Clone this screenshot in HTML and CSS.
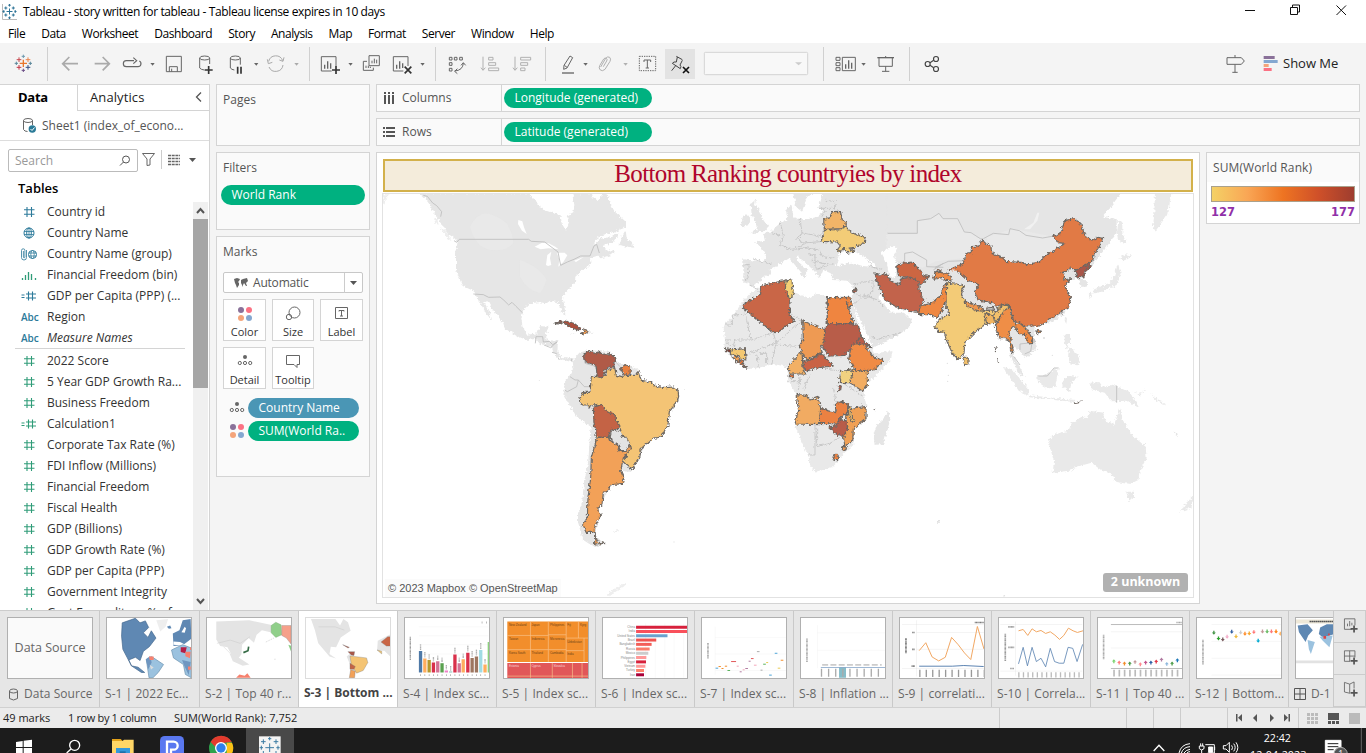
FILE: index.html
```html
<!DOCTYPE html>
<html lang="en">
<head>
<meta charset="utf-8">
<title>Tableau - story written for tableau</title>
<link rel="stylesheet" href="styles.css">
</head>
<body>
<svg class="defs" width="0" height="0">
  <symbol id="hash" viewBox="0 0 16 16"><path d="M6 3v10M10.500 3v10M3 5.800h10.500M3 10.200h10.500" fill="none" stroke="currentColor" stroke-width="1.100"/></symbol>
  <symbol id="calc" viewBox="0 0 16 16"><path d="M7.500 3.500v9M11.500 3.500v9M5 6h10M5 10h10M.5 7h3M.5 9.500h3" fill="none" stroke="currentColor" stroke-width="1.100"/></symbol>
  <symbol id="globe" viewBox="0 0 16 16"><g fill="none" stroke="currentColor"><circle cx="8" cy="8" r="5"/><ellipse cx="8" cy="8" rx="2.300" ry="5"/><path d="M3 6.500h10M3 9.500h10M8 3v10" stroke-width=".8"/></g></symbol>
  <symbol id="group" viewBox="0 0 18 16"><g fill="none" stroke="currentColor"><path d="M6.500 4v7.500a2 2 0 0 1-5 0v-7a1.700 1.700 0 0 1 3.400 0v6.500a.7.7 0 0 1-1.500 0V5" stroke-width=".8"/><circle cx="12.500" cy="8.500" r="4"/><ellipse cx="12.500" cy="8.500" rx="1.700" ry="4" stroke-width=".8"/><path d="M8.500 7h8M8.500 10h8" stroke-width=".8"/></g></symbol>
  <symbol id="bin" viewBox="0 0 16 16"><path d="M1.500 11v2M4.500 8v5M7.500 5v8M10.500 7v6M14.500 11v2" fill="none" stroke="currentColor" stroke-width="1.300"/></symbol>
  <symbol id="detail" viewBox="0 0 16 14"><circle cx="8" cy="3" r="2" fill="#666"/><g fill="none" stroke="#666"><circle cx="2.800" cy="9" r="1.600"/><circle cx="8" cy="9" r="1.600"/><circle cx="13.200" cy="9" r="1.600"/></g></symbol>
  <symbol id="dots" viewBox="0 0 16 16"><circle cx="4" cy="4" r="3" fill="#8a7199"/><circle cx="12" cy="4" r="3" fill="#fb7183"/><circle cx="4" cy="12" r="3" fill="#f4a47a"/><circle cx="12" cy="12" r="3" fill="#84a7d0"/></symbol>
  <path id="down" d="M-2-6h4v5h4l-6 7-6-7h4z"/>
  <path id="up" d="M-2 6h4V1h4l-6-7-6 7h4z"/>
  <filter id="coast" x="-5%" y="-5%" width="110%" height="110%"><feTurbulence type="fractalNoise" baseFrequency=".12" numOctaves="3" seed="4" result="n"/><feDisplacementMap in="SourceGraphic" in2="n" scale="14" xChannelSelector="R" yChannelSelector="G"/></filter>
</svg>

<header class="titlebar">
  <svg class="appicon" viewBox="0 0 16 16"><path d="M.5 0v15.500H15" stroke="#bbb" fill="none"/><path d="M7.500 4.500v6M4.500 7.500h6M3.800 2.500v3M2.300 4h3M11.300 2.500v3M9.800 4h3M3.800 9.500v3M2.300 11h3M11.300 9.500v3M9.800 11h3M7.500 0v2.500M6.200 1.200h2.600M7.500 12.500V15M6.200 13.800h2.600M1.800 6v3M13.200 6v3M.5 7.500h2M12.500 7.500h2" stroke="#2d7396" fill="none"/></svg>
  <span class="apptitle">Tableau - story written for tableau - Tableau license expires in 10 days</span>
  <svg class="wincontrols" width="126" height="24" fill="none" stroke="#111"><path d="M5 10.500h10M50.500 7.500h7v7h-7zM52.500 7v-2h7v7H58M96.500 5.500l9.500 9.500M106 5.500L96.500 15"/></svg>
</header>
<nav class="menubar"><span>File</span><span>Data</span><span>Worksheet</span><span>Dashboard</span><span>Story</span><span>Analysis</span><span>Map</span><span>Format</span><span>Server</span><span>Window</span><span>Help</span></nav>

<div class="toolbar">
  <svg class="tg" width="48" height="41" viewBox="0 129 144 123" fill="none" stroke-width="3"><path d="M70 179v22M59 190h22" stroke="#e8762c" stroke-width="4"/><path d="M57 172v14M50 179h14" stroke="#c6484f"/><path d="M84 172v14M77 179h14" stroke="#ea8550"/><path d="M57 195v14M50 202h14" stroke="#c33545"/><path d="M84 195v14M77 202h14" stroke="#344d83"/><path d="M70 164v10M65 169h10" stroke="#6e99af"/><path d="M70 206v10M65 211h10" stroke="#6a4c86"/><path d="M49 185v10M44 190h10M91 185v10M86 190h10" stroke="#5b879b"/></svg>
  <svg class="tg" width="262" height="41" viewBox="144 129 786 123" fill="none" stroke="#666" stroke-width="4">
    <g stroke="#aaa"><path d="M234 191H190M208 171l-20 20 20 20" stroke-width="5"/><path d="M284 191h44M308 171l20 20-20 20" stroke-width="5"/><path d="M806 184a22 22 0 0 1 42-2M849 195a22 22 0 0 1-42 6" stroke-width="3"/><path d="M802 178l3 13 12-4M838 180l11 4 3-12" stroke-width="3"/></g>
    <path d="M402 182h-23a9 9 0 0 0 0 18h35a9 9 0 0 0 4-17M400 173l10 9-10 9" stroke-width="3.500"/>
    <path d="M499 169h45v46h-45zM508 215v-15h24v15M515 215v-9" stroke-width="3"/>
    <ellipse cx="614" cy="174" rx="15" ry="6" stroke-width="3"/><path d="M599 174v30q4 5 14 6M629 174v18" stroke-width="3"/><path d="M626 198v24M614 210h24" stroke="#333" stroke-width="5"/>
    <ellipse cx="706" cy="174" rx="15" ry="6" stroke-width="3"/><path d="M691 174v30q4 5 12 6M721 174v20" stroke-width="3"/><path d="M713 200v21M723 200v21" stroke="#333" stroke-width="5"/>
    <path d="M451 189h13l-6 8zM762 189h13l-6 8z" fill="#666" stroke="none"/><path d="M883 189h13l-6 8z" fill="#aaa" stroke="none"/>
  </svg>
  <svg class="tg" width="126" height="41" viewBox="930 129 378 123" fill="none" stroke="#666" stroke-width="3">
    <path d="M995 213h-31v-43h44v28"/><path d="M974 206v-12M983 206v-22M992 206v-16" stroke-width="4"/><path d="M1008 198v24M996 210h24" stroke="#333" stroke-width="5"/>
    <path d="M1107 167h31v30h-31zM1116 190v-8M1123 190v-14M1130 190v-11M1101 184h-11v27h30v-8M1098 204v-7M1105 204v-7M1111 204v-4"/>
    <path d="M1210 213h-30v-43h44v28"/><path d="M1190 206v-12M1199 206v-22M1208 204v-14" stroke-width="4"/><path d="M1214 200l20 20M1234 200l-20 20" stroke="#333" stroke-width="5"/>
    <path d="M1045 189h13l-6 8zM1261 189h13l-6 8z" fill="#666" stroke="none"/>
  </svg>
  <svg class="tg" width="110" height="41" viewBox="-12 129 330 123" fill="none" stroke="#666" stroke-width="3">
    <path d="M28 172h8v8h-8zM43 172h8v8h-8zM59 172h8v8h-8zM28 188h8v8h-8zM28 205h8v8h-8zM44 213q25-2 26-24M52 206l-8 8 8 7M63 196l7-8 7 8"/>
    <g stroke="#b0b0b0"><path d="M129 170v40M123 203l6 8 7-8M146 172h13v8h-13zM146 188h21v8h-21zM146 204h30v8h-30zM225 170v40M219 203l6 8 7-8M242 172h30v8h-30zM242 188h21v8h-21zM242 204h13v8h-13z"/></g>
  </svg>
  <svg class="tg" width="278" height="41" viewBox="318 129 834 123" fill="none" stroke="#666" stroke-width="3">
    <path d="M390 168l8 5-17 31-10 4 1-12zM373 196l8 6"/><path d="M366 219h36" stroke-width="4"/>
    <path d="M482 201l15-26q6-7 12-3 5 5 1 12l-15 24q-8 7-14 2-6-6-2-13l12-20q4-5 8-2 4 3 1 8l-10 17" stroke="#b0b0b0"/>
    <path d="M430 189h13l-6 8z" fill="#666" stroke="none"/><path d="M550 189h13l-6 8z" fill="#b0b0b0" stroke="none"/>
    <path d="M598 169h49v43h-49z" stroke-dasharray="4 3"/><path d="M612 186v-6h20v6M622 180v24M617 204h10"/>
    <rect x="675" y="147" width="90" height="90" fill="#e3e3e3" stroke="none"/>
    <path d="M709 169l18 10M712 171l-3 15q-8-2-12 4l24 16q4-7-1-11l7-14M707 197l-12 15" stroke="#444"/><path d="M729 201l18 18M747 201l-18 18" stroke="#111" stroke-width="5"/>
    <rect x="793" y="157" width="310" height="67" rx="3" fill="#f8f8f8" stroke="#d4d4d4"/><path d="M1065 187h21l-10 9z" fill="#ccc" stroke="none"/>
  </svg>
  <svg class="tg" width="86" height="41" viewBox="1152 129 258 123" fill="none" stroke="#666" stroke-width="3">
    <path d="M1188 172h12v9h-12zM1188 188h12v9h-12zM1188 203h12v9h-12zM1207 172h39v40h-39z"/><path d="M1217 206v-13M1226 206v-25M1235 206v-18" stroke-width="4"/><path d="M1264 189h13l-6 8z" fill="#666" stroke="none"/>
    <path d="M1312 173h50" stroke-width="4"/><path d="M1317 173v26h40v-26M1337 168v5M1337 199v15M1326 214h22"/>
  </svg>
  <svg class="tg last" width="30" height="41" viewBox="1410 129 90 123" fill="none" stroke="#444" stroke-width="3.500"><circle cx="1463" cy="192" r="7.500"/><circle cx="1488" cy="177" r="7.500"/><circle cx="1488" cy="207" r="7.500"/><path d="M1470 188l11-7M1470 196l11 7"/></svg>
  <svg class="guide" width="56" height="41" viewBox="907 129 168 123" fill="none" stroke="#666" stroke-width="3"><path d="M919 173h43l9 10-9 10h-43zM943 165v8M943 193v24M935 217h16"/><g stroke="none"><path d="M1029 168h33v9h-33z" fill="#8a7199"/><path d="M1029 180h42v9h-42z" fill="#84a7d0"/><path d="M1029 192h15v9h-15z" fill="#f4a47a"/><path d="M1029 204h24v9h-24z" fill="#fb7183"/></g></svg>
  <span class="showme">Show Me</span>
</div>

<main class="work">
  <aside class="side">
    <div class="sidetabs"><b>Data</b><span>Analytics</span><svg width="10" height="12" fill="none" stroke="#555" stroke-width="1.300"><path d="M7 1.500L2.500 6 7 10.500"/></svg></div>
    <div class="source"><svg width="16" height="17" fill="none" stroke="#666"><ellipse cx="6" cy="3.500" rx="4.500" ry="2"/><path d="M1.500 3.500v9q1 2 4 2M10.500 3.500V8"/><circle cx="10.300" cy="12" r="3.700" fill="#2b7b98" stroke="none"/><path d="M8.500 12l1.500 1.500 2.500-3" stroke="#fff"/></svg>Sheet1 (index_of_econo...</div>
    <div class="find"><div class="search">Search<svg width="12" height="12" fill="none" stroke="#555"><circle cx="7" cy="4.500" r="3.500"/><path d="M4.500 7L1 10.500"/></svg></div>
      <svg width="60" height="22" fill="none" stroke="#666"><path d="M4.500 4.500h12L12 10v6l-3 .5V10z"/><path d="M23.500 1v19" stroke="#ccc"/><path d="M30 6.500h12M30 9.500h12M30 12.500h12M30 15.500h12" stroke-width="1.400" stroke-dasharray="3 .7"/><path d="M51 9h7l-3.500 4z" fill="#555" stroke="none"/></svg></div>
    <h2>Tables</h2>
    <div class="listwrap">
      <ul class="fields">
        <li class="d"><svg><use href="#hash"/></svg>Country id</li>
        <li class="d"><svg><use href="#globe"/></svg>Country Name</li>
        <li class="d"><svg class="w"><use href="#group"/></svg>Country Name (group)</li>
        <li><svg><use href="#bin"/></svg>Financial Freedom (bin)</li>
        <li class="d"><svg><use href="#calc"/></svg>GDP per Capita (PPP) (...</li>
        <li class="d"><i class="abc">Abc</i>Region</li>
        <li class="d"><i class="abc">Abc</i><em>Measure Names</em></li>
        <li class="rule"></li>
        <li><svg><use href="#hash"/></svg>2022 Score</li>
        <li><svg><use href="#hash"/></svg>5 Year GDP Growth Ra...</li>
        <li><svg><use href="#hash"/></svg>Business Freedom</li>
        <li><svg><use href="#calc"/></svg>Calculation1</li>
        <li><svg><use href="#hash"/></svg>Corporate Tax Rate (%)</li>
        <li><svg><use href="#hash"/></svg>FDI Inflow (Millions)</li>
        <li><svg><use href="#hash"/></svg>Financial Freedom</li>
        <li><svg><use href="#hash"/></svg>Fiscal Health</li>
        <li><svg><use href="#hash"/></svg>GDP (Billions)</li>
        <li><svg><use href="#hash"/></svg>GDP Growth Rate (%)</li>
        <li><svg><use href="#hash"/></svg>GDP per Capita (PPP)</li>
        <li><svg><use href="#hash"/></svg>Government Integrity</li>
        <li><svg><use href="#hash"/></svg>Govt Expenditure % of</li>
      </ul>
      <div class="scroll"><svg width="15" height="17" fill="none" stroke="#555" stroke-width="2"><path d="M4 11l3.500-4L11 11"/></svg><div class="thumb"></div><svg width="15" height="17" fill="none" stroke="#555" stroke-width="2"><path d="M4 6l3.500 4L11 6"/></svg></div>
    </div>
  </aside>

  <section class="cards">
    <div class="card pages">Pages</div>
    <div class="card filters">Filters<div class="pill">World Rank</div></div>
    <div class="card marks">Marks
      <div class="marktype"><svg width="14" height="10" fill="#666"><path d="M0 1l3-1 3 1-1 2-1 1 1 1 0 2-2 3-1-3-1-2zM7 2l2-1 4-1 1 3-2 2 1 3-1 0-2-3-1 2 0 2-1-2-1-2z"/></svg><span>Automatic</span><svg class="dd" width="18" height="20"><path d="M.5 0v20" stroke="#ccc"/><path d="M6 8h7l-3.500 4z" fill="#555"/></svg></div>
      <div class="btns">
        <div class="btn"><svg width="16" height="16"><use href="#dots"/></svg>Color</div>
        <div class="btn"><svg width="16" height="16" fill="none" stroke="#666"><circle cx="9.500" cy="6.500" r="5.500"/><circle cx="4" cy="11" r="2.700"/></svg>Size</div>
        <div class="btn"><svg width="16" height="16" fill="none" stroke="#666"><path d="M1.500 1.500h12v11h-12zM5 5.500v-1h5v1M7.500 4.500v5.500M6 10h3"/></svg>Label</div>
        <div class="btn"><svg width="16" height="14"><use href="#detail"/></svg>Detail</div>
        <div class="btn"><svg width="16" height="16" fill="none" stroke="#666"><path d="M1.500 1.500h13v9h-2.500v3l-3-3H1.500z"/></svg>Tooltip</div>
      </div>
      <div class="enc"><svg width="16" height="14"><use href="#detail"/></svg><div class="pill blue">Country Name</div></div>
      <div class="enc"><svg width="16" height="16"><use href="#dots"/></svg><div class="pill">SUM(World Ra..</div></div>
    </div>
  </section>

  <section class="right">
    <div class="shelf"><div><svg width="12" height="12" fill="none" stroke="#555" stroke-width="2"><path d="M2 0v2M6 0v2M10 0v2M2 3v9M6 3v9M10 3v9"/></svg>Columns</div><div class="pill">Longitude (generated)</div></div>
    <div class="shelf"><div><svg width="12" height="12" fill="none" stroke="#555" stroke-width="2"><path d="M0 2h2M0 6h2M0 10h2M3 2h9M3 6h9M3 10h9"/></svg>Rows</div><div class="pill">Latitude (generated)</div></div>
    <div class="vizrow">
      <div class="viz">
        <h1>Bottom Ranking countryies by index</h1>
        <div class="map">
          <svg width="810" height="403" viewBox="383 194 810 403">
            <!-- Americas -->
            <g transform="translate(380 150) scale(.33333)">
              <g fill="#e6e6e6" filter="url(#coast)">
                <path d="M118 130L135 145 150 165 163 190 172 200 180 220 196 235 202 250 225 266 232 278 228 310 228 360 240 390 248 408 280 422 292 445 306 468 318 490 336 512 328 485 312 455 322 450 335 475 355 500 370 520 374 535 410 558 440 570 468 567 480 582 515 590 520 607 540 628 560 632 577 637 580 626 560 622 545 622 532 605 534 572 500 571 498 550 506 530 480 528 472 550 442 554 428 530 424 505 430 480 450 460 475 457 500 460 510 452 534 457 543 475 546 487 556 496 553 465 546 440 565 420 585 400 586 380 610 358 632 345 630 325 650 318 665 325 692 316 705 305 695 300 680 306 670 285 700 275 716 250 690 262 660 266 640 286 648 268 665 256 702 246 738 232 738 216 715 194 703 183 690 160 684 135 665 130 664 142 650 150 638 140 636 130 577 130 583 165 580 187 560 197 567 220 558 242 545 220 542 196 510 186 485 178 470 155 452 141 447 130Z"/>
                <path d="M716 285L722 265 737 240 740 265 755 275 760 293 743 290Z"/><path d="M8 133l20 0-10 10-4 20-6 2zM162 205l10 3 4 16-10-3zM180 230l20 16 15 25-16-10z" fill="#eee"/>
                <path d="M578 632L598 608 625 600 690 606 716 640 755 650 772 658 782 690 830 710 865 712 893 735 895 752 865 790 862 835 795 885 765 950 752 966 722 962 720 985 690 1005 670 1050 655 1080 650 1130 645 1160 680 1183 642 1191 610 1170 594 1120 594 1090 606 1060 612 1000 625 930 632 830 588 798 550 730 556 690 575 670 580 652Z" />
                <path d="M618 541l24 6-15 4zM572 549l12 1-8 6z M700 1142l22-2-10 6-12 0z M680 1335l20-17 30-15 12 0-35 22-18 14z" fill="#eee"/>
                <circle cx="475" cy="694" r="2"/><circle cx="913" cy="718" r="2"/><circle cx="882" cy="1176" r="2"/>
              </g>
              <g fill="#ebebeb"><path d="M270 230q20-40 50-40 40 10 60 30 20 30 20 60-20 20-40 20-70 10-90-70zM420 330q60 20 80 60-10 30-20 40-40-10-60-50z" opacity=".5"/></g>
              <g fill="#fff"><path d="M415 210l12 4 5 18 8 20-14-10-12-20zM464 290l22-12 20 2 20 10 10 8-30-3-24 3zM498 345l4-30 12-10-4 20 4 20-10 3zM530 308l24 0 8 8-12 20-15 14 3-22zM582 332l30-12-24 16z"/></g>
              <g fill="none" stroke="#bdbdbd" stroke-width="2.500"><path d="M222 272l8 5 8-9H446l8 6 40 2 40 30 8 40 20-10 20-8 20-10h28l12-30 8-5 8 26M130 136l12 3 16 20 12 8 15 18-3 15"/><path d="M280 432l30 2 16 8 34-1 12 10 14 14 10-8 12 12 20 20M466 580l2-20 20 0 2 16 18-2 10 10 14-8M492 585l20 8 18-17M516 607l14 4M534 622l4 8M576 625l-2 8M610 610l5 30 35 10 0 30M570 680l15 10 10 0 18 20 20 0M595 690l-5 20-28 15-8-5M702 630l18 20"/></g>
              <g stroke="#6d6762" stroke-width="3.500" stroke-linejoin="round" filter="url(#coast)">
                <path fill="#ab4f3c" d="M524 523l14-10 20 0 26 8 18 14-4 6-26-7-12-12-20-5-10 6z"/><path fill="#ee9a52" d="M602 550l8-4 2-8 8 2 1 12z"/><path fill="#b05a47" d="M611 616l14-14 18 8 12-4 14 7 22-2 17 16-6 12 0 10-26 8-6 28-18-4-4-36-24-6-12-10z"/>
                <path fill="#e8803f" d="M722 657l12-12 18 3-2 24-17 4z"/>
                <path fill="#f4c474" d="M634 678l18 2 14 4 12-10 2-12 24-9 5 23 14 4 16-4 30 0 5-15 10 30 30 6 12 12 30 4 24-2 14 10 2 18-4 16-24 30-4 38-20 38-24 4-14 10-22 20-5 28-24 36-28-26 12-16 8-24-12-10-5-24-14-14 0-24-18-14-10-16-24-12-10-9-12-9-16 10-2-6-16 0-10-16 12-22 20 0z"/>
                <path fill="#c46344" d="M640 772l26-9 10 18 30 15 0 12 14 20-6 12-20-2-10 24-36 0 0-18-6-24z"/>
                <path fill="#e3e3e3" d="M690 860l4-16 20-6 9 4 2 16 14 4 10 20-8 22-24 0 3-14-25-16z"/>
                <path fill="#f2a158" d="M652 862l36 0 4 10 25 16-3 14 24 0 14-16 2 10-24 28-8 38 10 24-4 14-38 5-3 18-17 4-4 38-12 6 0 14 10 8-18 32-4 22-24 0-10-22 14-22 2-60 8-60 2-60 14-50zM644 1150l8 26 24 4-32 2z"/>
              </g>
            </g>
            <!-- Asia and Oceania base -->
            <g transform="translate(900 190) scale(.33333)">
              <g fill="#e5e5e5" filter="url(#coast)">
                <path d="M-60 0H670L610 80 650 90 650 130 590 210 575 225 545 265 562 275 560 290 540 290 538 262 510 270 490 290 508 330 495 370 450 400 410 405 400 440 412 475 375 505 358 480 340 470 342 500 375 560 360 555 330 495 325 450 300 450 285 400 250 405 195 460 192 490 175 508 140 450 130 405 108 375 60 370 10 360 -60 250Z"/>
                <path d="M765 0h50l-10 70-40 55-6-15 4-40zM655 90l12 10 0 30 12 30-24-8-4-20zM655 205l22-12 20 4-26 18zM654 220l8 30-14 40-20 4-16 10-30 6-4-10 48-20 16-20zM566 308l12 2-6 18zM495 380l6 4-2 18-5-10zM494 432l16 0 0 26-10 20-6-20zM508 470l32 30-6 26-24-6-6-20zM308 530l30 10 50 60-6 14-26-12zM386 616l140 14-4 6-134-14zM412 562l64-28-10 56-24 6-28-20zM486 570l20-12 28 2-18 14-8 32-20-14zM568 578l30-2 10 14 30-6 50 22 30 44-40-18-44 2-20-26-40-10zM700 605l20 6 18-14-18 20zM752 612l50 36-30-16z" fill="#e9e9e9"/>
                <path d="M444 750L465 732 505 722 515 700 545 680 560 685 570 662 612 668 610 688 642 704 660 655 668 690 682 712 690 730 737 770 740 805 720 840 715 870 690 882 650 876 630 850 605 842 575 818 525 832 510 842 458 848 462 815ZM678 905h24l0 18-14 10zM840 965l22-30 22-20-10 38z" fill="#e9e9e9"/>
                <path d="M820 724l18 14-8-2zM111 990h8v8h-8zM310 1222l8-5v6z" fill="#e0e0e0"/>
              </g>
              <path fill="#f1f1f1" d="M372 118l28-20 12-30 6 0-6 24-22 26z"/><path fill="#e9e9e9" d="M-50 130h102l0-38 40-6 25-16 12 16 44 0 20 40 20 2 34 22-50 54-90 10-40 20-55-20-64 0zM260 140l80-24 120 24 30 40-110 46-60-10-50-30z"/>
              <g fill="none" stroke="#bdbdbd" stroke-width="2.500"><path d="M-50 130h102l0-38 40-6 25-16 12 16 44 0 20 40 20 2 34 22M250 146l30-16 46 4 4-18 28 6 20 14 50 8 34-6M14 225v-35l24-4 42 24 0 20 50 2M105 232l40-18 50-2M100 240l30-20M412 558l30 0 20-24 14 0M650 588v50M342 500l18 25M360 480l0-18 36-4-4 26-18 8"/></g>
            </g>
            <!-- Europe, Africa, Middle East -->
            <g transform="translate(700 190) scale(.33333)">
              <g fill="#e5e5e5" filter="url(#coast)">
                <path d="M165 157L195 152 188 128 212 128 228 110 245 95 262 92 258 60 275 45 280 82 300 88 330 86 352 80 372 62 355 55 370 0 560 0 560 260 640 365 620 360 588 345 545 310 535 320 558 350 575 368 612 368 638 395 620 420 520 473 462 350 455 322 458 285 445 272 400 270 392 250 370 240 360 265 340 240 290 195 295 215 322 240 312 268 302 245 268 205 230 228 208 240 216 248 190 262 175 278 156 287 130 275 130 208 190 215 198 195 182 170Z"/>
                <path fill="#e9e9e9" d="M180 290L255 270 278 270 282 295 278 305 330 325 352 310 385 322 450 322 460 345 480 430 515 475 522 490 578 483 572 510 505 580 490 602 500 650 500 690 460 722 460 765 432 790 400 830 345 846 330 825 325 798 300 745 283 702 298 650 288 610 265 575 262 535 250 528 220 522 170 535 140 537 110 515 72 480 75 450 70 405 100 375 128 335 150 310Z"/>
                <path d="M524 765L520 735 530 705 552 685 565 662 572 685 550 762Z"/>
                <path d="M148 132L170 118 168 100 155 75 152 42 168 28 165 45 175 55 190 90 204 110 196 122ZM122 112l6-30 14-10 8 12-6 22zM278 0l10 50 18 15 14-40 28-25z"/>
              </g>
              <g fill="#fff" filter="url(#coast)"><path d="M408 228l10-38 20-8 10 14 20-12 30 20 24 16 6 12-40-4-34-10zM545 190l30-22 20 4-14 24 10 24-4 44-20-6-6-38z"/></g>
              <g fill="none" stroke="#c2c2c2" stroke-width="2.500" filter="url(#coast)"><path d="M240 96l10 44-12 26 22 6M215 128l30 10M300 86l6 45-16 15 20 12-6 12-20 0M306 128l56 12M362 155l-52 4M310 172l48 8 10 20 35 5M325 190l20 8 0 30 16 10M130 225l18-2 -4 40 -8 10M160 208l55 14M246 166l24 12 50-4M290 150l16-20M335 210l30 10 36 2M345 240l40-15M355 55l48 0 4-20-30-4M376 60l-10 20M372 118l-12 20M460 285l60-15-2 30-16 25-30-10M460 345l30-30 40 14 20 20M515 440l18 8 70-20M500 210l30 30M505 228l40 10"/><path d="M150 282l34 28M72 405h25v-30l34-2M130 350l24 100-50 0-4 24-24-20M154 450l75-25M280 390l-60 35 8 34-80 30M228 460l80-70M215 525l12-60 80 5M200 520v-30l-22 0M178 530l-8-36M270 312l2 60 34 20M380 405v-80M310 602l20-50M300 560l-5 40M430 580l60 40M350 710v60l40-10 50-30M325 795l20 0 0-90M356 620l-2 20M408 660l60-4M400 500l-20 0 10 40 28 2M480 640l14 10M265 575l30 0M400 590l10 60M76 450l20 0"/></g>
              <g stroke="#6d6762" stroke-width="3.500" stroke-linejoin="round" filter="url(#coast)">
                <path fill="#f2b468" d="M371 88l17-5 9-18 24-1 6 26 12 10-10 16-56 2z"/>
                <path fill="#f3cc77" d="M374 118l42 2 22-10 14 16 43 16-2 16-26 14-20 2 16 8-20 8-6-14-12 0-4 12-10-8 10-12-10-12-48-2z"/>
                <path fill="#c96646" d="M182 288l72-17 8 30 8 16-2 60 16 12-50 38-14 0-90-73 0-10 52-32z"/>
                <path fill="#f3cf74" d="M258 272l18-2 4 40-10 18-14-30z"/>
                <path fill="#ef8540" d="M382 323l68-1 6 22-6 8-10-15 22 64H382z"/>
                <path fill="#b85d49" d="M382 402h92l8 32-12 28-2 24-20-6-16 16-44 2-18-24-8-20 12-20 2-24z"/>
                <path fill="#b85d49" d="M482 434l14 22 20 18-26-10-20-4z"/>
                <path fill="#ee9a52" d="M308 392l66 27-2 35-10 14 4 20-44 22-12-12-12-30 12-20z"/>
                <path fill="#c96244" d="M308 516l30-8 26-20 18 24 18 16-50 6-34 10z"/>
                <path fill="#f2b065" d="M262 534l38-48 6 0 4 56 8 10-46 0z"/>
                <path fill="#f08b45" d="M456 462l36 0 30 40 30 8-30 30-52 4-24-36z"/>
                <path fill="#f2ad62" d="M454 538l20 6 28-4 0 44-14 20-38-26z"/>
                <path fill="#f1d180" d="M422 544l34-4 2 14-10 24-30 0z"/>
                <path fill="#f1ab62" d="M288 614l34 2 8 14 24-8 8 34 14 4-14 20 2 24-80-2 12-40z"/>
                <path fill="#eb8142" d="M362 656l46 12-2-26 20-8 18 8-2 28-22 14-12 18-50-2z"/>
                <path fill="#f0a055" d="M444 670l12-16 42-4 0 36-38 30-2 38-24 14-4-30 14-28-6-28z"/>
                <path fill="#f3bd66" d="M446 642l8 16 0 20 10 14-6 6-12-22z"/>
                <path fill="#b85b48" d="M386 710l20-2 14-20 22 6 0 24-10 22-24-8z"/>
                <circle cx="407" cy="801" r="8" fill="#e8803f"/><circle cx="433" cy="775" r="6" fill="#ee9a52"/>
                <path fill="#f3c872" d="M90 480l46-4 2 34-12-2-10-12-10 0-14-2z"/><path fill="#f0a055" d="M100 504l10-8 10 12-12 8z"/><path fill="#e8763c" d="M112 516l12-6 16 26z"/><path fill="#7c4038" d="M73 476l18 2 0 8-10 0z"/>
                <path fill="#e8763c" d="M268 555h12v8h-12z"/><path fill="#b85d49" d="M458 305l8-12 2 8-6 8zM414 592l10-4-2 12-6 2zM518 656l6 4z"/>
                <path fill="#cc6642" d="M590 228l16-8 30-4 26 26 8 14 18 4-26 24-30-22-36-2z"/>
                <path fill="#c2644b" d="M525 248l12 8 20-6 20 28 22 6 6-18 24-4 28 10 0 26 14 30-6 22 8 18-46-4-8-6-28-6-36-22-16-36-10-26z"/>
              </g>
            </g>
            <!-- Asia marks -->
            <g transform="translate(900 190) scale(.33333)">
              <g stroke="#6d6762" stroke-width="3.500" stroke-linejoin="round" filter="url(#coast)">
                <path fill="#e17a45" d="M146 240l44-20 8-30 16-2 0-18 20-2 14-20 10 14 14 4 4 24 30 12 12 12 52 4 12 6 34-8 18-18 50-30 10-8-20-2-16-20 24-8 12-38 28-6 20 14 14 40 22 10 16-8 14 2-12 34-12 10-6 24-40 24-14 4-14-6-10 10-14 4 8 10-4 12 24-4-20 22 8 10 10 28-6 24-28 20-24 14-36 24-44 0-20-12-14-2-4-30-12-16-24 4-24-14-42-8-8-26 10-20-30-12-34-30-10z"/>
                <path fill="#a95748" d="M526 242l20-12 26-12-4 16-16 14 0 12-20 4-4-12z"/>
                <path fill="#ef8843" d="M60 348l34-8 28-24 12-32 14-6 8 40-24 24-10 30-16 10-12-8-38 0z"/><path fill="#ee8a45" d="M102 268l2-20 18 0 24 2 10 20-20 2-8-10z"/><path fill="#e8803f" d="M110 244l6-8 8 4z"/>
                <path fill="#f3cb77" d="M140 278l20 4 10 0 22 6-8 26 14 20 50 24 40 8 10-20 24-4-2 14-14 14-12 22-40 12-24 18-36 36-2 32-16 18-18-16-20-44-4-20-20-4-10-16 18-22 26-14-10-24z"/>
                <path fill="#f0954c" d="M196 334l50 18 10 12-24-2-34-14z"/><path fill="#e3e3e3" d="M260 354l20-2 4 8-22 0z"/>
                <path fill="#f1b460" d="M254 370l12 4 14 4 4 22-24 2z"/>
                <path fill="#f3c06a" d="M280 376l30-32 20 6-20 18-12 16-8 12z"/>
                <path fill="#ef8e46" d="M312 362l18-12 4 32 14 22-22 20 14 56-6 10-8-40-12-6-18 0-10-36z"/>
                <path fill="#ef8a42" d="M346 406l14-6 22 20 16 28 0 12-12 2-14-32-10 4-12-12zM408 424l12-5 4 6-10 6z"/>
                <path fill="#f3c06a" d="M194 498l10 10 0 14-10 2-4-14z"/>
                <path fill="#8f4c3d" d="M524 640l20-7-10 6z"/><path fill="none" d="M288 470l-2 18M292 508l4 10"/>
              </g>
              <g fill="#ddd"><circle cx="142" cy="520" r="2"/><circle cx="145" cy="556" r="2"/><circle cx="143" cy="574" r="2"/><circle cx="432" cy="444" r="3"/><circle cx="457" cy="496" r="2"/></g>
            </g>
          </svg>
          <span class="credit">© 2023 Mapbox © OpenStreetMap</span>
          <span class="unknown">2 unknown</span>
        </div>
      </div>
      <div class="legend">SUM(World Rank)<div class="ramp"></div><div class="ends"><span>127</span><span>177</span></div></div>
    </div>
  </section>
</main>

<footer class="tabs">
  <div class="tab first"><div class="thumbnail ds">Data Source</div><p><svg width="11" height="13" fill="none" stroke="#666"><ellipse cx="5.500" cy="3" rx="4" ry="2"/><path d="M1.500 3v7.500q4 3 8 0V3"/></svg>Data Source</p></div>
  <div class="tab second"><div class="thumbnail"><svg viewBox="321 54 254 180"><path fill="#5f88b3" stroke="#41658c" stroke-width="2" d="M367 68l40-14 14 14 16-6 10 20-16 16 14 14 10-20 14 22-20 26-18 14-10 28-14-10-20 8 8 18 20 4 20 16-10 0-30-20-26-50-4-40z"/><path fill="#eee" d="M470 60l36-4-8 24-16 14z"/><path fill="#5f88b3" d="M502 80l10-4 4 8-8 2zM520 100l20-10 10-30 24-4 2 60-26 20-28 2z"/><path fill="#fff" d="M546 96l10-16 4 4-4 14zM522 124l20 2 16 8-20 2-16-2z"/><path fill="#9bc2df" stroke="#6a90ad" stroke-width="2" d="M440 180l16-10 36 24-16 24-16 16-12 0zM516 150l34-16 26 10 0 90-18-10-6-30-30-20z"/><path fill="#6f96c0" d="M438 178l14-10 4 20-10 20zM548 180l26 6-6 40-14-30z"/><path fill="#b61e45" d="M544 142l18 0-4 18-14-4z"/><path fill="#f8816f" d="M448 170l14 0 0 10-12 0zM558 155l16 0-2 20-14-6zM566 200l8 0v10h-8zM572 142h4v8h-4z"/><path fill="#ddd" d="M450 195l12 8-8 6z"/></svg></div><p>S-1 | 2022 Ec...</p></div>
  <div class="tab"><div class="thumbnail"><svg viewBox="620 54 254 180"><path fill="#e4e4e4" d="M648 64l100-4 64 14 20 12-20 10-26-6-16 14-8 24-16-14-20 20-2 30-12 14-14-6-16-30-22-4-12-20zM688 160l30 14 30 20-20 4-30-14z"/><path stroke="#bbb" fill="none" d="M650 130l40-10 30 10 30-20M670 140l20 20"/><path fill="#90cf8a" stroke="#72a06f" d="M814 76l14-10 16 8 2 30-18 8-14-14z"/><path fill="#f6a08a" stroke="#888" d="M846 76l28 0 0 56-14-18-14-8z"/><path fill="#88cc84" d="M866 134l10 4v22z"/><path stroke="#356b45" stroke-width="5" fill="none" d="M746 140l-2 12-14 6"/><path fill="#f6816e" d="M708 234l10-10 16 4 8-8 10 14z"/><path stroke="#777" stroke-dasharray="3 3" d="M798 126l24-12M824 178h4"/></svg></div><p>S-2 | Top 40 r...</p></div>
  <div class="tab active"><div class="thumbnail"><svg viewBox="917 54 254 180"><path fill="#e4e4e4" d="M932 56l74 0 14 20 10-20 14 10 8 26-30 20-14 30-16-2-4 22 20 14-20-6-34-40-10-40zM1134 122l40-20v70l-20-20-22 0zM1040 170l16-14 10 50-4 28h-6l-2-30z"/><path fill="none" stroke="#bbb" d="M955 80h50l28 10"/><g stroke="#777"><path fill="#a95748" d="M1044 155l20 0-2 12-8-2zM1028 134l20 8-4 2z"/><path fill="#f4c474" d="M1050 168l50 6 4 14-14 24-20 8-16-26z"/><path fill="#c46344" d="M1050 190l16 10-4 8-12 0z"/><path fill="#f2a158" d="M1052 210l14 4-2 20h-16z"/><path fill="#c96646" d="M1144 126l20-16 10 0v28l-14 0z"/><path fill="#f3c872" d="M1132 150l14 4v8z"/></g></svg></div><p>S-3 | Bottom ...</p></div>
  <div class="tab"><div class="thumbnail"><svg viewBox="1214 54 254 180"><g stroke="#eee"><path d="M1256 80h210M1256 107h210M1256 134h210M1256 162h210"/></g><g stroke-width="10" fill="none"><path stroke="#4e79a7" d="M1261 218v-65"/><path stroke="#ffad5e" d="M1274 218v-42M1390 218v-40M1456 218v-24"/><path stroke="#b6992d" d="M1287 218v-38"/><path stroke="#d9304a" d="M1300 218v-30M1365 218v-54M1404 218v-60"/><path stroke="#d37295" d="M1313 218v-34M1378 218v-28"/><path stroke="#59a14f" d="M1326 218v-28"/><path stroke="#ee82c8" d="M1339 218v-6"/><path stroke="#86bcb6" d="M1352 218v-3"/><path stroke="#9d7660" d="M1417 218v-44M1430 218v-48"/><path stroke="#a0dbe4" d="M1443 218v-68"/><path stroke="#8cd17d" d="M1469 218v-92"/></g><g stroke="#999" stroke-width="4" stroke-dasharray="2 1.500"><path d="M1261 150v-18M1274 172v-16M1287 176v-14M1300 184v-14M1313 180v-14M1326 186v-14M1339 208v-14M1352 212v-14M1365 160v-18M1378 186v-14M1390 174v-14M1404 154v-18M1417 170v-18M1430 166v-18M1443 146v-18M1456 190v-14"/></g><path stroke="#999" stroke-width="6" stroke-dasharray="2 11" d="M1260 226h210M1446 67h22"/><path stroke="#999" stroke-width="4" stroke-dasharray="3 1" d="M1230 180v-70"/></svg></div><p>S-4 | Index sc...</p></div>
  <div class="tab"><div class="thumbnail"><svg viewBox="41 54 254 180"><path fill="#f28e2b" d="M51 64h244v122H51z"/><path fill="#e15759" d="M51 189h244v46H51z"/><g stroke="#f9c28c" stroke-width="2" fill="none"><path d="M51 106h124M51 149h124M121 64v122M175 64v122M229 64v122M175 104h54M175 149h54M229 114h66M266 64v50M229 152h54M283 114v72M121 189v45M187 189v45M248 189v45M277 189v45M51 229h244"/></g><g fill="#6d4419" font-size="9" font-family="Liberation Sans"><text x="56" y="77">New Zealand</text><text x="124" y="77">Japan</text><text x="180" y="77">Philippines</text><text x="232" y="77">Fiji</text><text x="271" y="77">Kyrg</text><text x="56" y="119">Taiwan</text><text x="124" y="120">Indonesia</text><text x="180" y="119">Micronesia</text><text x="232" y="129">Uzbekistan</text><text x="56" y="161">Korea South</text><text x="124" y="161">Thailand</text><text x="180" y="161">Cambodia</text><text x="232" y="164">India</text></g><g fill="#f9d5d5" font-size="9" font-family="Liberation Sans"><text x="56" y="201">Estonia</text><text x="124" y="201">Cyprus</text><text x="191" y="201">Slovakia</text></g></svg></div><p>S-5 | Index sc...</p></div>
  <div class="tab"><div class="thumbnail"><svg viewBox="338 54 254 180"><path stroke="#eee" d="M467 70v164M496 70v164M525 70v164M553 70v164M582 70v164"/><g stroke-width="9"><path stroke="#d7213c" d="M438 81h154"/><path stroke="#f9505b" d="M438 94h154"/><path stroke="#6aa2ce" d="M438 107h95"/><path stroke="#ef5450" d="M438 120h61"/><path stroke="#f35e58" d="M438 133h47"/><path stroke="#f97c6a" d="M438 147h41"/><path stroke="#ccc" d="M438 160h37"/><path stroke="#f99" d="M438 173h31M438 199h28"/><path stroke="#d7213c" d="M438 186h30"/><path stroke="#ff8068" d="M438 212h24"/><path stroke="#aa0038" d="M438 225h24"/></g><g font-size="9" fill="#888" text-anchor="end" font-family="Liberation Sans"><text x="435" y="84">China</text><text x="435" y="97">India</text><text x="435" y="110">United States</text><text x="435" y="123">Brazil</text><text x="435" y="136">Bangladesh</text><text x="435" y="150">Russia</text><text x="435" y="163">Mexico</text><text x="435" y="176">Philippines</text><text x="435" y="189">Egypt</text><text x="435" y="202">Vietnam</text><text x="435" y="215">Turkey</text><text x="435" y="228">Iran</text></g></svg></div><p>S-6 | Index sc...</p></div>
  <div class="tab"><div class="thumbnail"><svg viewBox="635 54 254 180"><path stroke="#eee" d="M675 80v145M675 112h214M675 162h214M675 212h214"/><path stroke="#aaa" stroke-width="5" stroke-dasharray="3 1" d="M653 176v-48"/><g stroke-width="3"><path stroke="#4aa3d8" d="M676 205h8M855 160h8M838 226h8"/><path stroke="#f28e2b" d="M685 200h7M694 206h6M704 199h7M873 181h8"/><path stroke="#59b25b" d="M712 212h8M820 193h8"/><path stroke="#e15759" d="M723 185h15M783 176h8"/><path stroke="#b07aa1" d="M749 216h6M766 206h8M776 184h6"/><path stroke="#f4a6b9" d="M740 199h6M758 210h6M792 196h8"/><path stroke="#aaa" d="M801 155h8M812 211h6"/><path stroke="#eaca50" d="M829 188h6M864 205h8"/></g></svg></div><p>S-7 | Index sc...</p></div>
  <div class="tab"><div class="thumbnail"><svg viewBox="932 54 254 180"><path stroke="#eee" d="M982 75v130M982 98h204M982 151h204"/><path stroke="#aaa" stroke-width="5" stroke-dasharray="3 1" d="M950 186v-72"/><path fill="#86bdc9" d="M1047 203h21v31h-21z"/><path stroke="#6e93bd" stroke-width="2" d="M992 203h194"/><path stroke="#ccc" stroke-width="5" stroke-dasharray="18 7" d="M996 195h180"/><path stroke="#aaa" stroke-width="24" stroke-dasharray="4 17.500" d="M992 219h190"/></svg></div><p>S-8 | Inflation ...</p></div>
  <div class="tab"><div class="thumbnail"><svg viewBox="1229 54 254 180"><path stroke="#ddd" fill="none" d="M1235 73h248M1279 60v170M1279 97h204M1279 148h204M1235 206h248"/><path fill="none" stroke="#f1a661" stroke-width="3" d="M1287 152l20-24 19 43 20 12 20-11 19-60 20 22 19 25 19 20 20-100 20 68"/><path stroke="#5b83b1" stroke-width="3" fill="none" d="M1287 199h100l35-2 60 3"/><path stroke="#777" stroke-width="5" stroke-dasharray="3 1" d="M1247 160v-46M1266 97h8M1266 148h8M1264 199h10M1455 67h28"/><path stroke="#999" stroke-width="22" stroke-dasharray="4 15.500" d="M1287 221h196"/></svg></div><p>S-9 | correlati...</p></div>
  <div class="tab"><div class="thumbnail"><svg viewBox="56 54 254 180"><path stroke="#ddd" fill="none" d="M60 73h248M106 64v164M60 214h248"/><path fill="none" stroke="#f1a661" stroke-width="3" d="M115 92l14-4 14 18 13-20 13 9 14-4 14 9 14-5 14 10 14 13 13-12 14-22 14 8 13 5 17-5"/><path stroke="#5b83b1" stroke-width="2.500" fill="none" d="M115 192l14-50 13 56 14-56 13 43 14-10 14 26 14-56 13 40 14 5 14 0 13-48 14 3 13 40 17-52"/><path stroke="#999" stroke-width="5" stroke-dasharray="3 1" d="M75 183v-82M84 80h18M84 142h18M90 206h12"/><path stroke="#bbb" stroke-width="16" stroke-dasharray="4 10" d="M114 225h196"/></svg></div><p>S-10 | Correla...</p></div>
  <div class="tab"><div class="thumbnail"><svg viewBox="353 54 254 180"><path stroke="#999" stroke-width="2" d="M392 73h215M392 206h215"/><path stroke="#ddd" d="M392 95h215M392 144h215"/><use href="#up" x="401" y="184" fill="#7ad36e"/><use href="#up" x="417" y="188" fill="#ff7b7b"/><use href="#up" x="433" y="191" fill="#f28e2b"/><use href="#up" x="449" y="191" fill="#4a9a47"/><use href="#up" x="465" y="186" fill="#c49a9a"/><use href="#up" x="481" y="193" fill="#ff8a90"/><use href="#up" x="497" y="188" fill="#c4558b"/><use href="#up" x="513" y="188" fill="#3060a5"/><use href="#up" x="529" y="185" fill="#e03848"/><use href="#up" x="545" y="179" fill="#b07aa1"/><use href="#up" x="561" y="192" fill="#8db8dd"/><use href="#up" x="577" y="191" fill="#4a9a47"/><use href="#up" x="593" y="181" fill="#1c78b8"/><path stroke="#aaa" stroke-width="5" stroke-dasharray="3 1" d="M370 178v-74M590 67h17"/><path stroke="#bbb" stroke-width="20" stroke-dasharray="5 11" d="M399 220h208"/></svg></div><p>S-11 | Top 40 ...</p></div>
  <div class="tab"><div class="thumbnail"><svg viewBox="650 54 254 180"><path stroke="#e4e4e4" d="M694 73h210M694 124h210M694 175h210M694 226h210"/><use href="#down" x="701" y="98" fill="#419344"/><use href="#down" x="715" y="115" fill="#2ca02c"/><use href="#down" x="728" y="118" fill="#77595c"/><use href="#down" x="741" y="110" fill="#f5aac8"/><use href="#down" x="755" y="95" fill="#3460a2"/><use href="#down" x="768" y="109" fill="#eebc40"/><use href="#down" x="782" y="97" fill="#ccc"/><use href="#down" x="795" y="101" fill="#ff8a25"/><use href="#down" x="808" y="100" fill="#f5a830"/><use href="#down" x="822" y="96" fill="#ff7777"/><use href="#down" x="835" y="122" fill="#00a9d0"/><use href="#down" x="848" y="94" fill="#c49a9a"/><use href="#down" x="862" y="94" fill="#64b960"/><use href="#down" x="875" y="94" fill="#ff7777"/><use href="#down" x="889" y="94" fill="#ff7f0e"/><use href="#down" x="902" y="101" fill="#ffb86b"/><path stroke="#aaa" stroke-width="5" stroke-dasharray="3 1" d="M668 194v-76"/></svg></div><p>S-12 | Bottom...</p></div>
  <div class="tab dash"><div class="thumbnail"><svg viewBox="947 54 254 180"><path fill="#eee8d8" d="M947 58h254v12H947z"/><path stroke="#555" stroke-width="5" stroke-dasharray="5 1" d="M988 64h76"/><path fill="#5f88b3" d="M952 76l30-4 16 18-14 16-8 20-20-30zM1020 82l20-10 24 0v30l-36 10-12-10z"/><path fill="#9bc2df" d="M982 120l22 6-12 36-6-14zM1018 110l40-4-10 36-20-20z"/><path fill="#d44" d="M1030 108h8v8h-8zM1044 100h5v6h-5z"/><path fill="#e2e2e2" d="M947 182h120v8H947z"/></svg></div><p><svg width="12" height="12" fill="none" stroke="#555"><path d="M.5.500h11v11H.500zM6 0v12M0 6h12"/></svg>D-1</p></div>
  <div class="adders">
    <svg viewBox="0 0 24 32"><path d="M13 17.500H4.500v-12h12V13M8 14v-3M10.500 14V8M13 13v-3"/><path class="plus" d="M15.500 13v8M11.500 17h8"/></svg>
    <svg viewBox="0 0 24 32"><path d="M11 17.500H4.500v-12h12V13M4.500 11.500h12M10.500 5.500v12"/><path class="plus" d="M15.500 13v8M11.500 17h8"/></svg>
    <svg viewBox="0 0 24 32"><path d="M11 17.500L4.500 16V5L10.500 7l5-2.500V12M10.500 7v10"/><path class="plus" d="M15.500 13v8M11.500 17h8"/></svg>
  </div>
</footer>

<div class="status"><span class="s1">49 marks</span><span class="s2">1 row by 1 column</span><span class="s3">SUM(World Rank): 7,752</span>
  <svg width="367" height="21"><path d="M.5 0v21M127.500 0v21M154.500 0v21M181.500 0v21M228.500 0v21M299.500 0v21" stroke="#ccc"/><g fill="#555"><path d="M237 6h1.500v7.500H237zM243 6v7.500l-4-3.700zM258 6v8l-4-4zM271 6v8l4-4zM285 6v7.500l4-3.700zM289.500 6h1.500v7.500h-1.500z"/></g><path d="M308 6.500h11M308 10.500h11M308 14.500h11" stroke="#bbb" stroke-width="3" stroke-dasharray="3 1"/><path fill="#555" d="M329 5h11v7h-11zM329 13h3v3h-3zM333 13h3v3h-3zM337 13h3v3h-3z"/><path fill="#bbb" d="M350 5h11v11h-11z"/></svg></div>

<div class="taskbar">
  <svg width="500" height="25" viewBox="0 384 1500 75">
    <path fill="#494949" d="M738 384h144v75H738z"/>
    <path fill="#fff" d="M48 426l20-3v18H48zM71 422l25-3v22H71zM48 444h20v18H48zM71 444h25v20H71z"/>
    <g fill="none" stroke="#fff" stroke-width="4"><circle cx="224" cy="436" r="15"/><path d="M213 447l-13 12"/></g>
    <path fill="#e3a21a" d="M336 417h26l6 6h-32z"/><path fill="#ffd666" d="M336 423h32l4-4h29v42h-65z"/><path fill="#3498db" d="M348 444h42v16h-42z"/><path fill="#1d6fa8" d="M359 454h18v8h-18z"/>
    <rect x="480" y="408" width="72" height="72" rx="14" fill="#5a78f0"/><path d="M501 459v-34h20a12 12 0 0 1 0 24h-8v10" stroke="#fff" stroke-width="7" fill="none"/>
    <circle cx="663" cy="444" r="36" fill="#2fa24c"/><path fill="#e33b2e" d="M632 426a36 36 0 0 1 63 0l-32 4-14 14z"/><path fill="#fbc116" d="M696 428a36 36 0 0 1 0 32H680V428z"/><circle cx="663" cy="444" r="18" fill="#fff"/><circle cx="663" cy="444" r="14" fill="#2f80ed"/>
    <path fill="#f4f4f4" d="M777 409h65v60h-65z"/><path fill="none" stroke="#3c7ca3" stroke-width="3" d="M809 430v26M796 443h26M790 418v14M783 425h14M828 418v14M821 425h14M809 411v10M804 416h10M784 437v12M779 443h10M834 437v12M829 443h10M790 453v12M828 453v12"/>
  </svg>
  <svg class="tray" width="219" height="25" viewBox="501 384 657 75" fill="none" stroke="#fff" stroke-width="3">
    <path d="M521 453l16-17 16 17" stroke-width="4"/><path d="M597 459q6-26 33-28M604 459q6-18 26-19M612 459q5-9 18-11M621 459q3-4 9-4"/>
    <path d="M676 434h27v25h-20M704 440v10M658 438h14v8q-7 8-14 0zM662 430v8M668 430v8M665 450v10"/><path d="M686 441h12v16h-12z" fill="#fff"/>
    <path d="M730 437h8l10-10v30l-10-10h-8zM755 436q5 7 0 14M761 431q9 11 0 23M768 427q11 16 0 31"/>
    <g stroke="none" fill="#fff" font-family="Open Sans,sans-serif" font-size="33"><text x="851" y="427" textLength="82" lengthAdjust="spacingAndGlyphs">22:42</text><text x="810" y="478" textLength="169" lengthAdjust="spacingAndGlyphs">12-04-2023</text></g>
    <path d="M1036 421h47v40h-47z" fill="#fff"/><path d="M1043 431h32M1043 440h32M1043 449h18" stroke="#222"/><circle cx="1082" cy="462" r="20" fill="#555" stroke="#aaa"/><text x="1075" y="471" font-size="26" fill="#fff" stroke="none" font-family="Open Sans,sans-serif">1</text><path d="M1144 384v75" stroke="#666"/>
  </svg>
</div>
</body>
</html>
```

FILE: styles.css
```css
* { box-sizing: border-box; }
body { margin: 0; width: 1366px; height: 753px; overflow: hidden; display: flex; flex-direction: column; background: #f4f4f4; font: 12px/16px "Open Sans", sans-serif; color: #333; }
svg { flex: none; display: block; }
.defs { position: absolute; }
.titlebar { height: 24px; background: #fff; display: flex; align-items: flex-start; flex: none; color: #000; }
.appicon { width: 16px; height: 16px; margin: 4px 4px 0 2px; }
.apptitle { font-size: 12px; line-height: 23px; letter-spacing: -.38px; margin-left: 1px; }
.wincontrols { margin-left: auto; }
.menubar { height: 19px; background: #fff; flex: none; display: flex; gap: 16px; padding-left: 8px; font-size: 12px; line-height: 19px; color: #000; letter-spacing: -.44px; }
.toolbar { height: 41px; flex: none; display: flex; align-items: center; }
.tg { background: linear-gradient(#d0d0d0, #d0d0d0) right 4px / 1px 34px no-repeat; }
.tg.last { background: none; }
.guide { margin-left: auto; }
.showme { margin: -1px 29px 0 4px; width: 54px; font-size: 13px; white-space: nowrap; color: #222; }
.work { height: 526px; flex: none; display: flex; }
.side { width: 210px; background: #fff; border-right: 1px solid #d4d4d4; display: flex; flex-direction: column; }
.sidetabs { height: 27px; display: flex; flex: none; border-top: 1px solid #d4d4d4; font-size: 13px; line-height: 25px; color: #222; }
.sidetabs b { width: 77px; padding-left: 18px; color: #000; letter-spacing: -.3px; }
.sidetabs span { width: 115px; height: 26px; padding-left: 12px; border-left: 1px solid #d4d4d4; border-bottom: 1px solid #d4d4d4; letter-spacing: .1px; }
.sidetabs svg { width: 17px; height: 26px; padding: 6px 0 8px 2px; border-bottom: 1px solid #d4d4d4; }
.source { height: 30px; flex: none; display: flex; align-items: center; border-bottom: 1px solid #ddd; padding-left: 22px; gap: 4px; color: #555; }
.find { display: flex; margin: 8px 0 0 8px; height: 23px; flex: none; }
.search { width: 130px; height: 23px; border: 1px solid #bbb; border-radius: 2px; padding: 0 6px; display: flex; align-items: center; justify-content: space-between; color: #999; }
h2 { font-size: 13px; line-height: 18px; margin: 7px 0 5px 18px; color: #000; font-weight: 600; }
.listwrap { flex: 1; display: flex; overflow: hidden; }
.fields { list-style: none; margin: -1px 0 0; padding: 0; width: 193px; height: 409px; overflow: hidden; }
.fields li { height: 21px; display: flex; align-items: center; padding-left: 21px; white-space: nowrap; color: #2f9c78; -webkit-text-fill-color: #333; }
.fields li.d { color: #2c7a9a; }
.fields svg { width: 16px; height: 16px; margin-right: 10px; }
.fields svg.w { width: 18px; margin: 0 9px 0 -1px; }
.abc { font: 600 10px/16px "Open Sans", sans-serif; width: 26px; -webkit-text-fill-color: #2c7a9a; }
.fields .rule { height: 1px; margin: 0 8px 1px 15px; background: #d4d4d4; }
.scroll { width: 15px; background: #f0f0f0; height: 408px; display: flex; flex-direction: column; }
.thumb { height: 169px; background: #a6a6a6; margin-bottom: auto; }
.cards { width: 154px; margin-left: 6px; display: flex; flex-direction: column; gap: 6px; }
.card { border: 1px solid #d4d4d4; background: #fafafa; padding: 7px 6px; color: #555; }
.pages { height: 62px; }
.filters { height: 78px; }
.marks { height: 241px; }
.pill { height: 20px; border-radius: 10px; background: #00b180; color: #fff; padding-left: 10.500px; font: 500 12px/19px "Open Sans", sans-serif; white-space: nowrap; }
.filters .pill { margin: 9px -2px 0; }
.marktype { height: 21px; margin-top: 12px; border: 1px solid #c8c8c8; border-radius: 2px; display: flex; align-items: center; padding-left: 10px; background: #fff; width: 140px; }
.marktype span { margin-left: 5px; letter-spacing: -.2px; }
.dd { margin-left: auto; }
.btns { display: grid; grid-template-columns: 43px 42px 43px; gap: 6px; margin-top: 6px; }
.btn { height: 42px; border: 1px solid #d4d4d4; background: #fff; display: flex; flex-direction: column; align-items: center; justify-content: space-between; padding: 6px 0 0; font-size: 11px; color: #333; }
.enc { display: flex; align-items: center; gap: 3px; margin: 9px 0 0 6px; }
.enc + .enc { margin-top: 3px; }
.enc .pill { width: 111px; }
.pill.blue { background: #4a96b5; }
.right { width: 984px; margin-left: 6px; display: flex; flex-direction: column; gap: 6px; }
.shelf { height: 28px; flex: none; border: 1px solid #d4d4d4; background: #fafafa; display: flex; align-items: center; color: #555; }
.shelf > div:first-child { width: 125px; height: 26px; border-right: 1px solid #d4d4d4; display: flex; align-items: center; padding-left: 6px; gap: 7px; }
.shelf .pill { width: 148px; margin-left: 2px; }
.vizrow { display: flex; gap: 6px; align-items: flex-start; }
.viz { width: 824px; height: 452px; border: 1px solid #d4d4d4; background: #fff; padding: 6px 5px 0 5px; }
h1 { margin: 0 1px; height: 33px; border: 2px solid #d3b14b; background: #f4ecdb; text-align: center; font: 25px/25px "Liberation Serif", serif; letter-spacing: -.65px; color: #b0052c; }
.map { position: relative; margin-top: 1px; width: 812px; height: 405px; border: 1px solid #e2e2e2; }
.credit { position: absolute; left: 2px; bottom: 0; background: #fafafae0; padding: 0 3px; font: 11px/18px "Liberation Sans", sans-serif; color: #555; }
.unknown { position: absolute; right: 5px; bottom: 5px; width: 85px; height: 19px; border-radius: 3px; background: #b1b1b1; color: #fff; text-align: center; font-weight: 700; font-size: 12.500px; line-height: 18px; }
.legend { width: 154px; height: 72px; border: 1px solid #d4d4d4; background: linear-gradient(#fafafa 29px, #fff 29px); padding: 7px 4px 0; color: #555; text-indent: 2px; letter-spacing: .1px; }
.ramp { margin-top: 10px; height: 16px; border: 1px solid #aaa18c; background: linear-gradient(90deg, #f4d166, #f9a655 25%, #ee7422 50%, #cf5029 75%, #9e3d2f); }
.ends { display: flex; justify-content: space-between; font: 700 11.500px/21px "DejaVu Sans", sans-serif; letter-spacing: 0; color: #9030a8; text-indent: 0; }
.tabs { height: 97px; flex: none; border-top: 1px solid #ccc; display: flex; background: #e6e6e6; overflow: hidden; }
.tab { width: 99px; flex: none; height: 97px; border-right: 1px solid #c9c9c9; padding: 6px 0 0 5px; color: #666; white-space: nowrap; }
.tab.first { width: 100px; padding-left: 6px; }
.tab.second { width: 100px; padding-left: 5px; }
.thumbnail { width: 86px; height: 62px; border: 1px solid #b0b0b0; background: #fff; overflow: hidden; margin-left: 1px; }
.thumbnail svg { width: 84px; height: 60px; }
.ds { text-align: center; line-height: 59px; font-size: 12.500px; background: #fafafa; }
.tab p { margin: 6px 0 0; line-height: 18px; display: flex; align-items: center; gap: 5px; letter-spacing: .05px; }
.tab.first p svg { margin-left: 2px; }
.active { background: #fff; color: #444; }
.active p { font-weight: 700; margin-top: 5px; letter-spacing: 0; }
.active .thumbnail { border-color: #ddd; }
.dash { width: 45px; overflow: hidden; }
.adders { width: 32px; border-right: 1px solid #ccc; }
.adders svg { width: 32px; height: 32px; padding: 3px 0 0 2px; border-bottom: 1px solid #ccc; fill: none; stroke: #666; stroke-width: 1; }
.adders .plus { stroke: #555; stroke-width: 2; }
.status { height: 21px; flex: none; background: #ebebeb; border-top: 1px solid #d0d0d0; display: flex; font-size: 11px; line-height: 20px; color: #222; }
.s1 { width: 65px; padding-left: 3px; }
.s2 { width: 109px; padding-left: 3px; letter-spacing: -.35px; }
.status svg { margin-left: auto; }
.taskbar { height: 25px; flex: none; background: #1c1c1c; display: flex; overflow: hidden; }
.tray { margin-left: auto; }
```
